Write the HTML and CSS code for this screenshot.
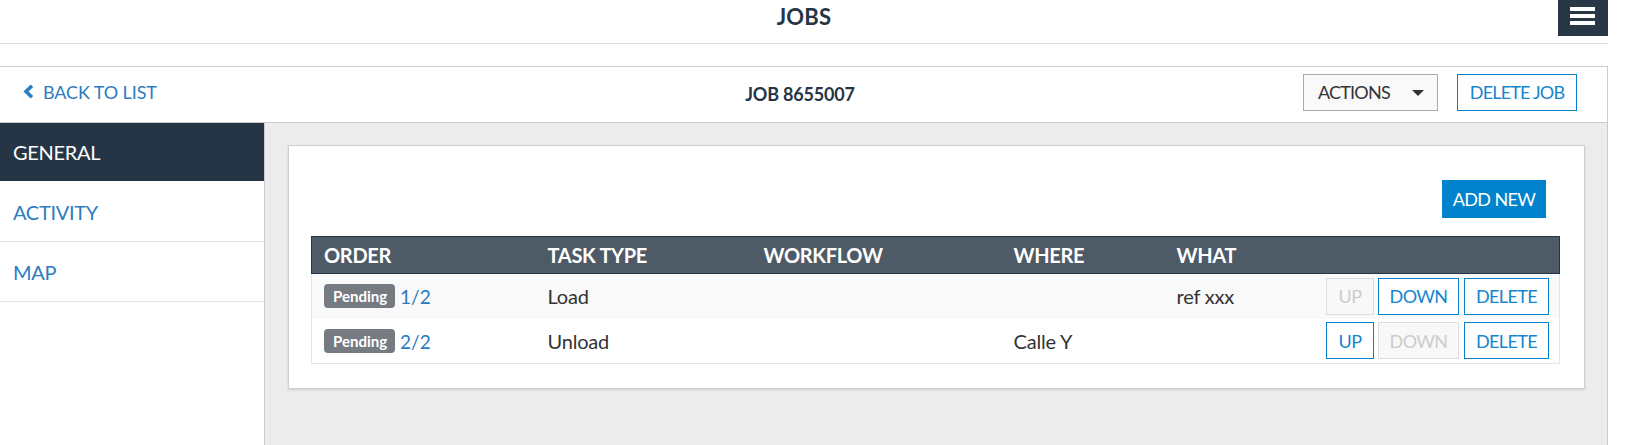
FILE: index.html
```html
<!DOCTYPE html>
<html lang="en">
<head>
<meta charset="utf-8">
<title>Jobs</title>
<link rel="stylesheet" href="styles.css">
</head>
<body>
<div class="page">
  <header class="topbar">
    <div></div>
    <h1 class="topbar-title">JOBS</h1>
    <button class="menu-btn" aria-label="Menu">
      <span class="bar"></span><span class="bar"></span><span class="bar"></span>
    </button>
  </header>

  <div class="subbar">
    <a class="back-link" href="#">
      <svg class="chev" width="11" height="15" viewBox="0 0 11 15"><path d="M9 1.8 L3 7.5 L9 13.2" fill="none" stroke="currentColor" stroke-width="3.6" stroke-linejoin="miter"/></svg>
      <span>BACK TO LIST</span>
    </a>
    <div class="job-title">JOB 8655007</div>
    <div class="subbar-actions">
      <button class="btn-actions"><span>ACTIONS</span> <span class="caret"></span></button>
      <button class="btn-outline btn-delete-job">DELETE JOB</button>
    </div>
  </div>

  <div class="main">
    <nav class="sidebar">
      <a class="side-item active" href="#">GENERAL</a>
      <a class="side-item" href="#">ACTIVITY</a>
      <a class="side-item" href="#">MAP</a>
    </nav>
    <section class="content">
      <div class="card">
        <div class="card-toolbar">
          <button class="btn-primary">ADD NEW</button>
        </div>
        <table class="tasks">
          <colgroup>
            <col class="c-order"><col class="c-type"><col class="c-flow"><col class="c-where"><col class="c-what"><col class="c-act">
          </colgroup>
          <thead>
            <tr><th>ORDER</th><th>TASK TYPE</th><th>WORKFLOW</th><th>WHERE</th><th>WHAT</th><th></th></tr>
          </thead>
          <tbody>
            <tr class="striped">
              <td><span class="badge">Pending</span> <a class="order-link" href="#">1/2</a></td>
              <td>Load</td>
              <td></td>
              <td></td>
              <td>ref xxx</td>
              <td class="row-actions">
                <button class="btn-sm b-up disabled">UP</button><button class="btn-sm b-down">DOWN</button><button class="btn-sm b-del">DELETE</button>
              </td>
            </tr>
            <tr>
              <td><span class="badge">Pending</span> <a class="order-link" href="#">2/2</a></td>
              <td>Unload</td>
              <td></td>
              <td>Calle Y</td>
              <td></td>
              <td class="row-actions">
                <button class="btn-sm b-up">UP</button><button class="btn-sm b-down disabled">DOWN</button><button class="btn-sm b-del">DELETE</button>
              </td>
            </tr>
          </tbody>
        </table>
      </div>
    </section>
  </div>
</div>
</body>
</html>
```

FILE: styles.css
```css
* { box-sizing: border-box; }

html, body {
  margin: 0;
  padding: 0;
  background: #ffffff;
  font-family: Lato, "Liberation Sans", sans-serif;
  font-size: 18px;
  color: #333333;
}

button {
  font-family: Lato, "Liberation Sans", sans-serif;
  font-size: 18px;
  cursor: pointer;
  white-space: nowrap;
}

a { text-decoration: none; }

.page {
  width: 1608px;
  height: 445px;
  display: flex;
  flex-direction: column;
  overflow: hidden;
}

/* top bar */
.topbar {
  height: 44px;
  border-bottom: 1px solid #dddddd;
  display: grid;
  grid-template-columns: 1fr auto 1fr;
  align-items: start;
  flex: none;
}

.topbar-title {
  margin: 0;
  font-size: 22px;
  font-weight: 700;
  color: #263545;
  line-height: 33px;
  letter-spacing: 0.2px;
}

.menu-btn {
  justify-self: end;
  width: 50px;
  height: 36px;
  border: none;
  padding: 7px 0 0 12px;
  background: #283646;
  display: flex;
  flex-direction: column;
  align-items: flex-start;
  gap: 3px;
}

.menu-btn .bar {
  display: block;
  width: 25px;
  height: 4px;
  background: #ffffff;
}

/* sub bar */
.subbar {
  margin-top: 22px;
  height: 57px;
  border-top: 1px solid #cccccc;
  border-bottom: 1px solid #cccccc;
  border-right: 1px solid #cccccc;
  display: grid;
  grid-template-columns: 1fr auto 1fr;
  align-items: center;
  padding: 0 30px 0 23px;
  flex: none;
}

.back-link {
  color: #2d7cc0;
  display: flex;
  align-items: center;
  gap: 9px;
  margin-top: -5px;
  font-size: 18px;
  letter-spacing: -0.1px;
}

.chev { display: block; margin-top: -1px; }

.job-title {
  font-weight: 700;
  font-size: 18px;
  color: #263545;
  margin-top: -1px;
  letter-spacing: -0.2px;
}

.subbar-actions {
  display: flex;
  justify-content: flex-end;
  gap: 19px;
  margin-top: -5px;
}

.btn-actions {
  width: 135px;
  height: 37px;
  background: #f9f9f9;
  border: 1px solid #aaaaaa;
  color: #333333;
  padding: 0 13px 0 14px;
  display: flex;
  align-items: center;
  justify-content: space-between;
  letter-spacing: -0.8px;
}

.caret {
  width: 0;
  height: 0;
  border-left: 6px solid transparent;
  border-right: 6px solid transparent;
  border-top: 6px solid #333333;
  margin-top: 2px;
}

.btn-outline {
  height: 37px;
  background: #ffffff;
  border: 1px solid #0a7fcb;
  color: #1585cf;
  padding: 0;
  letter-spacing: -0.8px;
}

.btn-delete-job { width: 120px; }

/* main */
.main {
  flex: 1;
  display: flex;
  min-height: 0;
}

.sidebar {
  width: 265px;
  flex: none;
  border-right: 1px solid #cccccc;
  display: flex;
  flex-direction: column;
}

.side-item {
  height: 60px;
  border-bottom: 1px solid #e5e5e5;
  color: #2d7cc0;
  padding: 0 13px;
  display: flex;
  align-items: center;
  font-size: 20px;
  letter-spacing: -0.3px;
}

.side-item.active {
  background: #263545;
  color: #ffffff;
  height: 59px;
  border-bottom: 1px solid #ffffff;
}

.content {
  flex: 1;
  background: #ececec;
  border-right: 1px solid #cccccc;
  padding: 22px 22px 0 23px;
}

.card {
  background: #ffffff;
  border: 1px solid #d0d0d0;
  box-shadow: 0 1px 2px rgba(0, 0, 0, 0.12);
  padding: 34px 23px 24px 22px;
}

.card-toolbar {
  display: flex;
  justify-content: flex-end;
  padding-right: 15px;
  margin-bottom: 18px;
}

.btn-primary {
  width: 104px;
  height: 38px;
  background: #0082cc;
  border: none;
  color: #ffffff;
  padding: 0;
  letter-spacing: -0.6px;
}

/* table */
.tasks {
  width: 1248px;
  border-collapse: collapse;
  table-layout: fixed;
  border: 1px solid #e5e5e5;
}

.c-order { width: 224px; }
.c-type { width: 216px; }
.c-flow { width: 250px; }
.c-where { width: 163px; }
.c-what { width: 149px; }
.c-act { width: 246px; }

.tasks th {
  background: #4e5a66;
  color: #ffffff;
  font-weight: 700;
  font-size: 20px;
  letter-spacing: -0.3px;
  text-align: left;
  height: 37px;
  padding: 0 12px;
  border-top: 1px solid #263545;
  border-bottom: 1px solid #263545;
}

.tasks th:first-child { border-left: 1px solid #263545; }
.tasks th:last-child { border-right: 1px solid #263545; }

.tasks td {
  height: 45px;
  padding: 0 12px;
  vertical-align: middle;
  color: #333333;
  font-size: 20px;
  letter-spacing: -0.2px;
}

.tasks tr.striped td { background: #f9f9f9; }

.badge {
  display: inline-block;
  background: #767b82;
  color: #ffffff;
  font-weight: 700;
  font-size: 15px;
  letter-spacing: 0;
  line-height: 24px;
  height: 24px;
  padding: 0 8px 0 9px;
  border-radius: 4px;
  vertical-align: 2px;
}

.order-link {
  color: #2a7abf;
  font-size: 19px;
  letter-spacing: 0;
}

.tasks td.row-actions {
  text-align: right;
  white-space: nowrap;
  padding: 0 10px 0 0;
  font-size: 0;
}

.btn-sm {
  height: 37px;
  background: #ffffff;
  border: 1px solid #0a7fcb;
  color: #1585cf;
  padding: 0;
  vertical-align: middle;
  font-size: 18px;
  letter-spacing: -0.6px;
}

.b-up { width: 48px; }
.b-down { width: 81px; margin-left: 4px; }
.b-del { width: 85px; margin-left: 5px; }

.btn-sm.disabled {
  background: #f8f8f8;
  border-color: #dddddd;
  color: #cccccc;
  cursor: default;
}
```
